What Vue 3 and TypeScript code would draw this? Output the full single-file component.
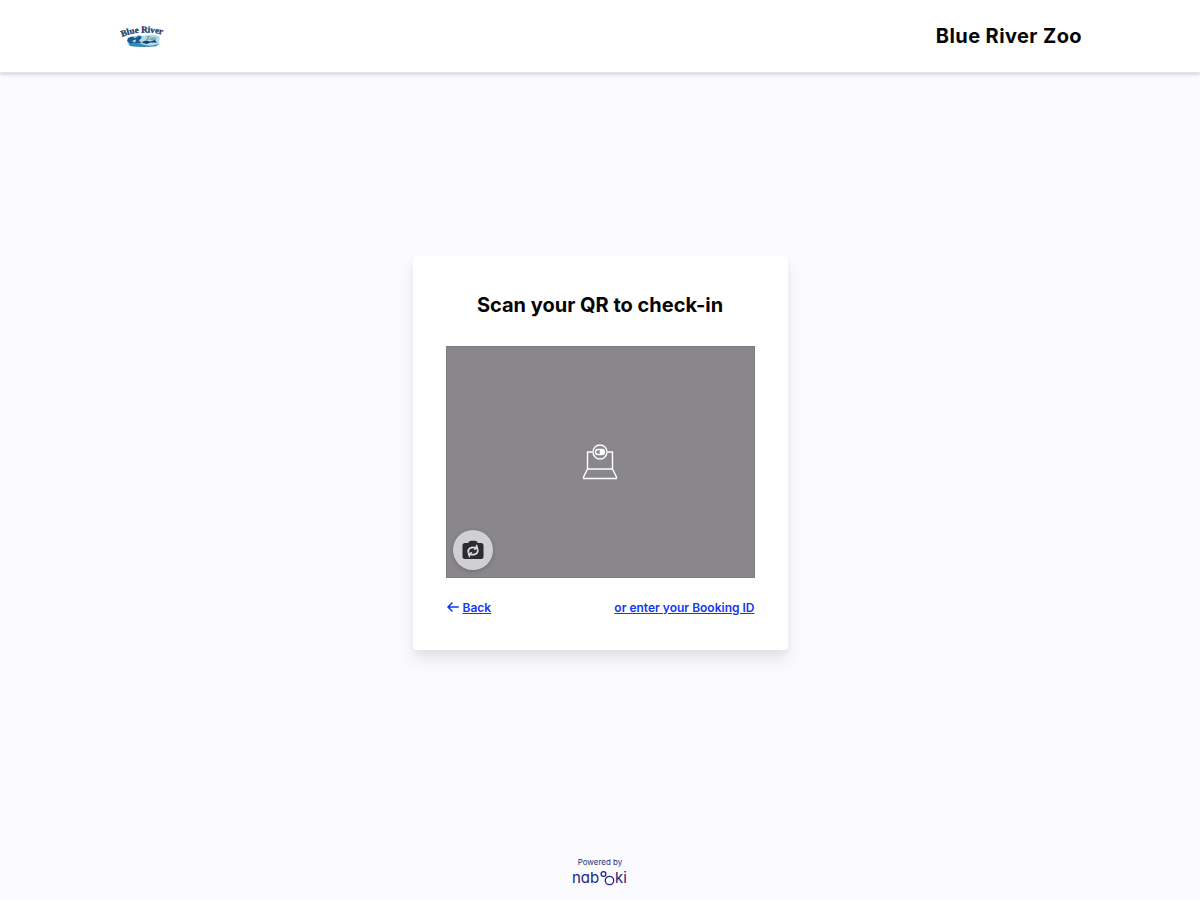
<script setup lang="ts">
import { ref } from 'vue'

const venue = ref<string>('Blue River Zoo')
const frontCamera = ref<boolean>(true)

function switchCamera(): void {
  frontCamera.value = !frontCamera.value
}
</script>

<template>
  <div class="page">
    <header class="topbar">
      <svg class="brand" viewBox="0 0 48 24" role="img" aria-label="Blue River Zoo logo">
        <defs>
          <path id="brand-arc" d="M2 13Q23 4 52 13" />
        </defs>
        <path d="M8 14Q16 10 24 12Q34 9 40 13L39 18Q41 20 37 22Q24 24 10 22Q5 20 9 18Z" fill="#b5d9e7" />
        <path d="M8 14L12 12.5L15 14L19 11.5L22 13L19 17L22 19L10 20L7 17Z" fill="#195b91" />
        <path d="M22 18L26 16.5L30 17.5L35 16L37 18.5L30 18.5L27 20L23 19Z" fill="#123f70" />
        <path d="M9 20Q17 18 23 20.5T39 20L36 22.3Q22 24 10 22Z" fill="#348caf" />
        <path d="M12 17L16 15.5L15 18.5Z" fill="#d5edf3" />
        <text class="brand-name"><textPath href="#brand-arc">Blue River</textPath></text>
        <text class="brand-zoo" x="26" y="16">Zoo</text>
      </svg>
      <h1 class="venue">{{ venue }}</h1>
    </header>

    <main class="content">
      <section class="card">
        <h2 class="title">Scan your QR to check-in</h2>
        <div class="camera">
          <svg class="webcam" viewBox="0 0 36 36" aria-hidden="true">
            <g fill="none" stroke="#fff" stroke-width="1.4" stroke-linejoin="round">
              <path d="M10.5 8H5.5V25H30.5V8H25.5M5.5 25L1.5 33V34.5H34.5V33L30.5 25" />
              <circle cx="18" cy="8" r="7" />
              <rect x="13.5" y="5.5" width="9" height="5" rx="2.5" />
            </g>
            <circle cx="20" cy="8" r="2.5" fill="#fff" />
          </svg>
          <button class="switch" type="button" aria-label="Switch camera" @click="switchCamera">
            <svg viewBox="0 0 22 20" aria-hidden="true">
              <path d="M3 3H6L7.5 1.2Q8 .8 9 .8H13Q14 .8 14.5 1.2L16 3H19Q21.5 3 21.5 5.5V16.5Q21.5 19 19 19H3Q.5 19 .5 16.5V5.5Q.5 3 3 3Z" fill="#2c2b32" />
              <g transform="rotate(-18 11 11)">
                <g fill="none" stroke="#dedde2" stroke-width="1.8">
                  <path d="M6 11.2Q6.6 7.2 10.5 7.2Q12.6 7.2 14.2 8.8" />
                  <path d="M16 10.8Q15.4 14.8 11.5 14.8Q9.4 14.8 7.8 13.2" />
                </g>
                <path d="M16.8 5.5V10.5H11.8ZM5.2 16.5V11.5H10.2Z" fill="#dedde2" />
              </g>
            </svg>
          </button>
        </div>
        <nav class="links">
          <a class="back" href="#back">
            <svg viewBox="0 0 12 10" aria-hidden="true">
              <path d="M11.2 5H1.2M5 1L1 5L5 9" fill="none" stroke="currentColor" stroke-width="1.6" stroke-linecap="round" stroke-linejoin="round" />
            </svg>
            <span>Back</span>
          </a>
          <a class="booking" href="#booking-id">or enter your Booking ID</a>
        </nav>
      </section>
    </main>

    <footer class="footer">
      <span class="powered">Powered by</span>
      <svg class="nabooki" viewBox="0 0 56 18" role="img" aria-label="nabooki">
        <text x="0" y="15">nab</text>
        <g fill="none" stroke="#25247b" stroke-width="1.3">
          <circle cx="31.5" cy="6" r="2.4" />
          <circle cx="37.5" cy="12.5" r="4.2" />
        </g>
        <text x="43" y="15">ki</text>
      </svg>
    </footer>
  </div>
</template>

<style>
body {
  background: #fafaff;
}
</style>

<style scoped>
.page {
  display: flex;
  flex-direction: column;
  min-height: 100vh;
  background: #fafaff;
  font-family: Inter, "Liberation Sans", sans-serif;
  color: #050508;
}

.topbar {
  display: flex;
  align-items: center;
  justify-content: space-between;
  box-sizing: border-box;
  height: 73px;
  padding: 0 118px 0 120px;
  border-bottom: 1px solid #e4e4e8;
  background: #fff;
  box-shadow: 0 1px 4px rgba(0, 0, 0, 0.2);
}

.brand {
  width: 48px;
  height: 24px;
  overflow: visible;
}

.brand-name {
  font: bold 9px "Liberation Serif", serif;
  fill: #193b62;
  stroke: #193b62;
  stroke-width: 0.3;
}

.brand-zoo {
  font: bold 6px "Liberation Serif", serif;
  fill: #4a91ad;
}

.venue,
.title {
  margin: 0;
  font-size: 20px;
  line-height: 24px;
  font-weight: 700;
}

.venue {
  letter-spacing: 0.02em;
}

.content {
  display: flex;
  flex: 1;
  align-items: center;
  justify-content: center;
}

.card {
  box-sizing: border-box;
  width: 100%;
  max-width: 375px;
  padding: 37px 33px 34px;
  border-radius: 4px;
  background: #fff;
  box-shadow: 0 10px 16px rgba(0, 0, 0, 0.08), 0 4px 6px rgba(0, 0, 0, 0.04);
}

.title {
  text-align: center;
}

.camera {
  position: relative;
  display: flex;
  align-items: center;
  justify-content: center;
  box-sizing: border-box;
  aspect-ratio: 4 / 3;
  margin-top: 29px;
  border: 1px solid #7e7c80;
  background: #89878b;
}

.webcam {
  width: 36px;
  height: 36px;
}

.switch {
  position: absolute;
  bottom: 7px;
  left: 6px;
  display: flex;
  align-items: center;
  justify-content: center;
  width: 40px;
  height: 40px;
  padding: 0;
  border: 0;
  border-radius: 50%;
  background: #d0cfd4;
  box-shadow: 0 1px 4px rgba(0, 0, 0, 0.2);
}

.switch svg {
  width: 22px;
  height: 20px;
}

.links {
  display: flex;
  justify-content: space-between;
  margin-top: 21px;
  font-size: 12px;
  line-height: 17px;
  font-weight: 600;
}

.links a {
  color: #1238f0;
}

.back {
  display: flex;
  align-items: center;
  gap: 4px;
  padding-left: 1px;
  text-decoration: none;
}

.back span {
  text-decoration: underline;
}

.back svg {
  width: 12px;
  height: 10px;
}

.footer {
  display: flex;
  flex-direction: column;
  align-items: center;
  box-sizing: border-box;
  height: 67px;
  padding-top: 23px;
  color: #29327e;
}

.powered {
  font-size: 8px;
  line-height: 12px;
}

.nabooki {
  width: 56px;
  height: 18px;
  overflow: visible;
}

.nabooki text {
  font-family: Inter, "Liberation Sans", sans-serif;
  font-size: 15px;
  font-weight: 400;
  font-feature-settings: "cv11";
  fill: #25247b;
}
</style>
